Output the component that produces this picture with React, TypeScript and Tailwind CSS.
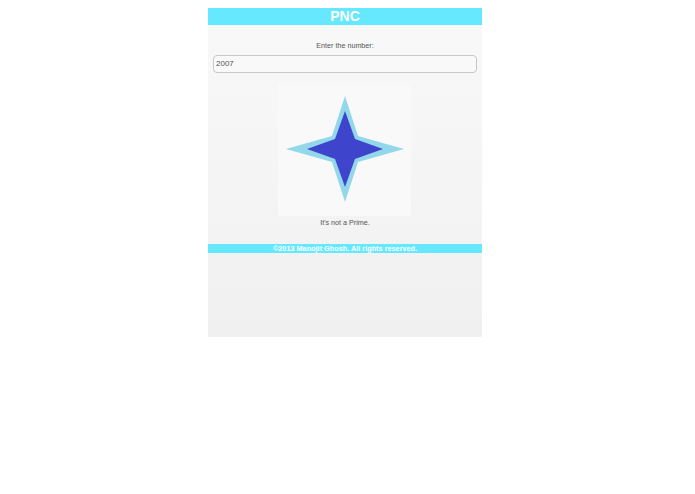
const App = () => {
  return (
    <div className="min-h-[494px] bg-white pt-2 font-['Liberation_Sans',Arial,sans-serif]">
      <div className="ml-[208px] flex h-[329px] w-[274px] flex-col bg-gradient-to-b from-[#f9f9f9] to-[#f0f0f0]">
        {/* Header */}
        <div className="h-[17px] bg-[#66e8ff] text-center text-[14px] leading-[17px] font-bold text-white">
          PNC
        </div>

        {/* Form */}
        <div className="mt-[15px] text-center text-[7.2px] leading-[11px] text-[#555]">
          Enter the number:
        </div>
        <div className="mx-[5px] mt-[4px] h-[18px] rounded-[4px] border border-[#c8c8c8] bg-[#f9f9f9] px-[2px] text-[8px] leading-[15px] text-[#555]">
          2007
        </div>

        {/* Star */}
        <div className="mt-[10px] ml-[70px] h-[133px] w-[133px] bg-[#f9f9f9]">
          <svg width="133" height="133" viewBox="278 83 133 133">
            <polygon
              points="345,96 358,136 404,149 358,162 345,202 332,162 286,149 332,136"
              fill="#93d8ea"
            />
            <polygon
              points="345,111 355,139 383,149 355,159 345,187 335,159 307,149 335,139"
              fill="#3e45cc"
            />
          </svg>
        </div>

        {/* Result */}
        <div className="mt-[1px] text-center text-[7.2px] leading-[11px] text-[#555]">
          It's not a Prime.
        </div>

        {/* Footer */}
        <div className="mt-[16px] h-[9px] bg-[#66e8ff] text-center text-[7.3px] leading-[9px] font-bold text-white">
          ©2013 Manojit Ghosh. All rights reserved.
        </div>
      </div>
    </div>
  )
}

export default App
